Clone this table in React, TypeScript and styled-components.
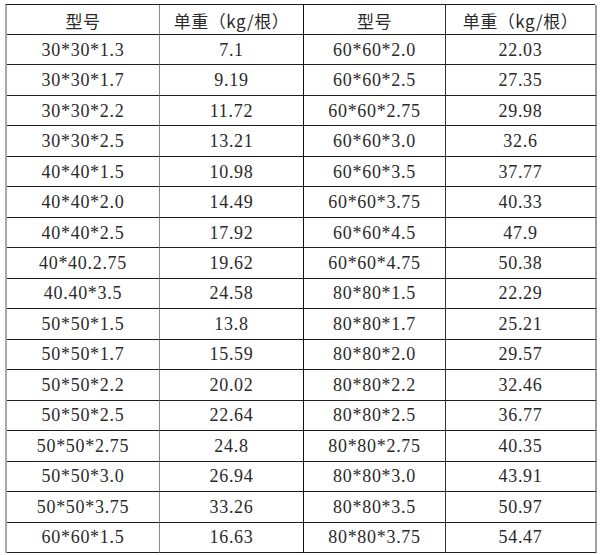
import React from "react";
import styled, { createGlobalStyle } from "styled-components";

const Global = createGlobalStyle`
  html, body { margin: 0; padding: 0; background: #fff; }
  body { font-family: "Liberation Serif", "Noto Sans CJK SC", serif; }
`;

const Page = styled.div`
  padding: 4px 0 0 5px;
`;

const Grid = styled.div`
  display: grid;
  grid-template-columns: 153px 144px 142px 151px;
  grid-template-rows: 30px repeat(17, 1fr);
  width: 590px;
  height: 549px;
  box-sizing: border-box;
  border-top: 1px solid #1c1c1c;
  border-left: 2px solid #a8a8a8;
`;

const Cell = styled.div<{ $col: number; $head?: boolean }>`
  box-sizing: border-box;
  display: flex;
  align-items: center;
  justify-content: center;
  border-bottom: 1px solid #1c1c1c;
  border-right: ${(p) =>
    p.$col === 0
      ? "1px solid #8a8a8a"
      : p.$col === 1
      ? "1px solid #111"
      : p.$col === 2
      ? "1px solid #333"
      : "2px solid #a0a0a0"};
  font-family: ${(p) =>
    p.$head
      ? '"Noto Sans CJK SC", "Liberation Serif", sans-serif'
      : '"Liberation Serif", "Noto Sans CJK SC", serif'};
  font-size: ${(p) => (p.$head ? "17px" : "18px")};
  letter-spacing: ${(p) => (p.$head ? "0.5px" : "0.7px")};
  color: #2a2a2a;
  white-space: nowrap;
  padding-top: 1px;
`;

const rows: [string, string, string, string][] = [
  ["30*30*1.3", "7.1", "60*60*2.0", "22.03"],
  ["30*30*1.7", "9.19", "60*60*2.5", "27.35"],
  ["30*30*2.2", "11.72", "60*60*2.75", "29.98"],
  ["30*30*2.5", "13.21", "60*60*3.0", "32.6"],
  ["40*40*1.5", "10.98", "60*60*3.5", "37.77"],
  ["40*40*2.0", "14.49", "60*60*3.75", "40.33"],
  ["40*40*2.5", "17.92", "60*60*4.5", "47.9"],
  ["40*40.2.75", "19.62", "60*60*4.75", "50.38"],
  ["40.40*3.5", "24.58", "80*80*1.5", "22.29"],
  ["50*50*1.5", "13.8", "80*80*1.7", "25.21"],
  ["50*50*1.7", "15.59", "80*80*2.0", "29.57"],
  ["50*50*2.2", "20.02", "80*80*2.2", "32.46"],
  ["50*50*2.5", "22.64", "80*80*2.5", "36.77"],
  ["50*50*2.75", "24.8", "80*80*2.75", "40.35"],
  ["50*50*3.0", "26.94", "80*80*3.0", "43.91"],
  ["50*50*3.75", "33.26", "80*80*3.5", "50.97"],
  ["60*60*1.5", "16.63", "80*80*3.75", "54.47"],
];

const header = ["型号", "单重（kg/根）", "型号", "单重（kg/根）"];

export default function App() {
  return (
    <>
      <Global />
      <Page>
        <Grid>
          {header.map((h, i) => (
            <Cell key={"h" + i} $col={i} $head>
              {h}
            </Cell>
          ))}
          {rows.map((r, ri) =>
            r.map((v, ci) => (
              <Cell key={ri + "-" + ci} $col={ci}>
                {v}
              </Cell>
            ))
          )}
        </Grid>
      </Page>
    </>
  );
}
